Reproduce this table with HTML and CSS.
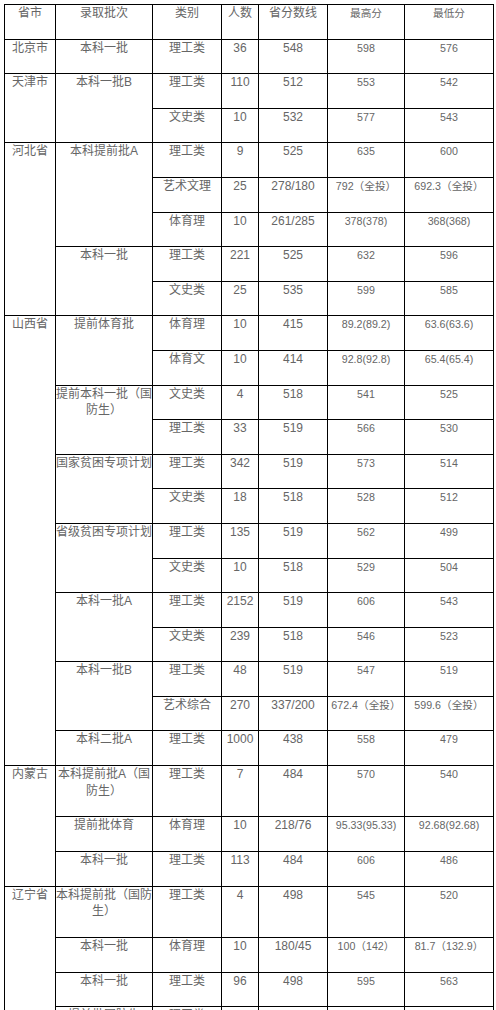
FILE: index.html
```html
<!DOCTYPE html>
<html lang="zh-CN">
<head>
<meta charset="utf-8">
<title>录取分数</title>
<link rel="stylesheet" href="styles.css">
</head>
<body>
<table class="scores">
  <colgroup>
    <col class="c-prov">
    <col class="c-batch">
    <col class="c-type">
    <col class="c-num">
    <col class="c-line">
    <col class="c-max">
    <col class="c-min">
  </colgroup>
  <tbody>
    <tr><td>省市</td><td>录取批次</td><td>类别</td><td>人数</td><td>省分数线</td><td class="sm">最高分</td><td class="sm">最低分</td></tr>

    <tr><td>北京市</td><td>本科一批</td><td>理工类</td><td>36</td><td>548</td><td class="sm">598</td><td class="sm">576</td></tr>

    <tr><td rowspan="2">天津市</td><td rowspan="2">本科一批B</td><td>理工类</td><td>110</td><td>512</td><td class="sm">553</td><td class="sm">542</td></tr>
    <tr><td>文史类</td><td>10</td><td>532</td><td class="sm">577</td><td class="sm">543</td></tr>

    <tr><td rowspan="5">河北省</td><td rowspan="3">本科提前批A</td><td>理工类</td><td>9</td><td>525</td><td class="sm">635</td><td class="sm">600</td></tr>
    <tr><td>艺术文理</td><td>25</td><td>278/180</td><td class="sm">792（全投）</td><td class="sm">692.3（全投）</td></tr>
    <tr><td>体育理</td><td>10</td><td>261/285</td><td class="sm">378(378)</td><td class="sm">368(368)</td></tr>
    <tr><td rowspan="2">本科一批</td><td>理工类</td><td>221</td><td>525</td><td class="sm">632</td><td class="sm">596</td></tr>
    <tr><td>文史类</td><td>25</td><td>535</td><td class="sm">599</td><td class="sm">585</td></tr>

    <tr><td rowspan="13">山西省</td><td rowspan="2">提前体育批</td><td>体育理</td><td>10</td><td>415</td><td class="sm">89.2(89.2)</td><td class="sm">63.6(63.6)</td></tr>
    <tr><td>体育文</td><td>10</td><td>414</td><td class="sm">92.8(92.8)</td><td class="sm">65.4(65.4)</td></tr>
    <tr><td rowspan="2">提前本科一批（国<br>防生）</td><td>文史类</td><td>4</td><td>518</td><td class="sm">541</td><td class="sm">525</td></tr>
    <tr><td>理工类</td><td>33</td><td>519</td><td class="sm">566</td><td class="sm">530</td></tr>
    <tr><td rowspan="2">国家贫困专项计划</td><td>理工类</td><td>342</td><td>519</td><td class="sm">573</td><td class="sm">514</td></tr>
    <tr><td>文史类</td><td>18</td><td>518</td><td class="sm">528</td><td class="sm">512</td></tr>
    <tr><td rowspan="2">省级贫困专项计划</td><td>理工类</td><td>135</td><td>519</td><td class="sm">562</td><td class="sm">499</td></tr>
    <tr><td>文史类</td><td>10</td><td>518</td><td class="sm">529</td><td class="sm">504</td></tr>
    <tr><td rowspan="2">本科一批A</td><td>理工类</td><td>2152</td><td>519</td><td class="sm">606</td><td class="sm">543</td></tr>
    <tr><td>文史类</td><td>239</td><td>518</td><td class="sm">546</td><td class="sm">523</td></tr>
    <tr><td rowspan="2">本科一批B</td><td>理工类</td><td>48</td><td>519</td><td class="sm">547</td><td class="sm">519</td></tr>
    <tr><td>艺术综合</td><td>270</td><td>337/200</td><td class="sm">672.4（全投）</td><td class="sm">599.6（全投）</td></tr>
    <tr><td>本科二批A</td><td>理工类</td><td>1000</td><td>438</td><td class="sm">558</td><td class="sm">479</td></tr>

    <tr><td rowspan="3">内蒙古</td><td>本科提前批A（国<br>防生）</td><td>理工类</td><td>7</td><td>484</td><td class="sm">570</td><td class="sm">540</td></tr>
    <tr><td>提前批体育</td><td>体育理</td><td>10</td><td>218/76</td><td class="sm">95.33(95.33)</td><td class="sm">92.68(92.68)</td></tr>
    <tr><td>本科一批</td><td>理工类</td><td>113</td><td>484</td><td class="sm">606</td><td class="sm">486</td></tr>

    <tr><td rowspan="4">辽宁省</td><td>本科提前批（国防<br>生）</td><td>理工类</td><td>4</td><td>498</td><td class="sm">545</td><td class="sm">520</td></tr>
    <tr><td>本科一批</td><td>体育理</td><td>10</td><td>180/45</td><td class="sm">100（142）</td><td class="sm">81.7（132.9）</td></tr>
    <tr><td>本科一批</td><td>理工类</td><td>96</td><td>498</td><td class="sm">595</td><td class="sm">563</td></tr>
    <tr><td>提前批国防生</td><td>理工类</td><td>3</td><td>498</td><td class="sm">530</td><td class="sm">520</td></tr>
  </tbody>
</table>
</body>
</html>
```

FILE: styles.css
```css
html, body {
  margin: 0;
  padding: 0;
  background: #fff;
}

body {
  padding: 4px 0 0 4px;
  font-family: "Liberation Sans", Arial, "Noto Sans CJK SC", sans-serif;
  color: #666;
}

.scores {
  border-collapse: collapse;
  table-layout: fixed;
  width: 489px;
  border: 1px solid #000;
}

.c-prov { width: 51px; }
.c-batch { width: 97px; }
.c-type { width: 69px; }
.c-num { width: 37px; }
.c-line { width: 69px; }
.c-max { width: 77px; }
.c-min { width: 89px; }

.scores td {
  border: 1px solid #000;
  padding: 0 0 16.8px 0;
  font-size: 12px;
  line-height: 16.8px;
  text-align: center;
  vertical-align: top;
  white-space: nowrap;
  overflow: hidden;
}

.scores td.sm {
  font-size: 10.67px;
}
```
